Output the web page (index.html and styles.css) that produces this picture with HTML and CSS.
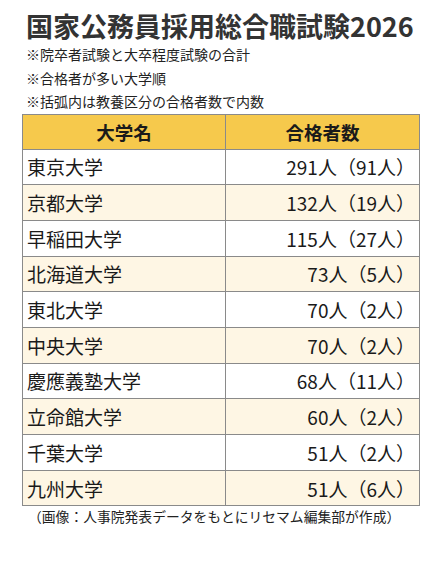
FILE: index.html
```html
<!DOCTYPE html>
<html lang="ja">
<head>
    <meta charset="utf-8">
    <title>国家公務員採用総合職試験2026</title>
    <link rel="stylesheet" href="styles.css">
</head>
<body>
    <div class="page">
        <h1 class="title">国家公務員採用総合職試験2026</h1>
        <ul class="notes">
            <li>※院卒者試験と大卒程度試験の合計</li>
            <li>※合格者が多い大学順</li>
            <li>※括弧内は教養区分の合格者数で内数</li>
        </ul>
        <table class="ranking">
            <thead>
                <tr>
                    <th>大学名</th>
                    <th>合格者数</th>
                </tr>
            </thead>
            <tbody>
                <tr><td>東京大学</td><td class="num">291人（91人）</td></tr>
                <tr><td>京都大学</td><td class="num">132人（19人）</td></tr>
                <tr><td>早稲田大学</td><td class="num">115人（27人）</td></tr>
                <tr><td>北海道大学</td><td class="num">73人（5人）</td></tr>
                <tr><td>東北大学</td><td class="num">70人（2人）</td></tr>
                <tr><td>中央大学</td><td class="num">70人（2人）</td></tr>
                <tr><td>慶應義塾大学</td><td class="num">68人（11人）</td></tr>
                <tr><td>立命館大学</td><td class="num">60人（2人）</td></tr>
                <tr><td>千葉大学</td><td class="num">51人（2人）</td></tr>
                <tr><td>九州大学</td><td class="num">51人（6人）</td></tr>
            </tbody>
        </table>
        <p class="caption">（画像：人事院発表データをもとにリセマム編集部が作成）</p>
    </div>
</body>
</html>
```

FILE: styles.css
```css
body {
    margin: 0;
    background: #ffffff;
    font-family: "Noto Sans CJK JP", "Noto Sans", sans-serif;
    color: #222222;
}

.page {
    width: 440px;
    padding: 10px 0 0 0;
}

.title {
    margin: 0 0 0 26px;
    font-size: 27px;
    line-height: 32px;
    font-weight: bold;
    color: #333333;
    letter-spacing: 0;
}

.notes {
    list-style: none;
    margin: 1px 0 0 26px;
    padding: 0;
    font-size: 14px;
    line-height: 23.5px;
    color: #222222;
}

.ranking {
    margin: 0 0 0 22px;
    width: 398px;
    border-collapse: collapse;
    font-size: 19px;
}

.ranking th,
.ranking td {
    border: 1px solid #8a8a8a;
    height: 34.7px;
    padding: 0;
    font-weight: normal;
}

.ranking th {
    background: #f6c94c;
    font-weight: bold;
    font-size: 18.5px;
    color: #1a1a1a;
    height: 34px;
}

.ranking th:first-child,
.ranking td:first-child {
    width: 198px;
}

.ranking td {
    padding-left: 4px;
    color: #1a1a1a;
}

.ranking td.num {
    text-align: right;
    padding-right: 4px;
}

.ranking tbody tr:nth-child(even) td {
    background: #fef6e4;
}

.caption {
    margin: 0 0 0 28px;
    font-size: 13.8px;
    line-height: 20px;
    color: #222222;
}
```
